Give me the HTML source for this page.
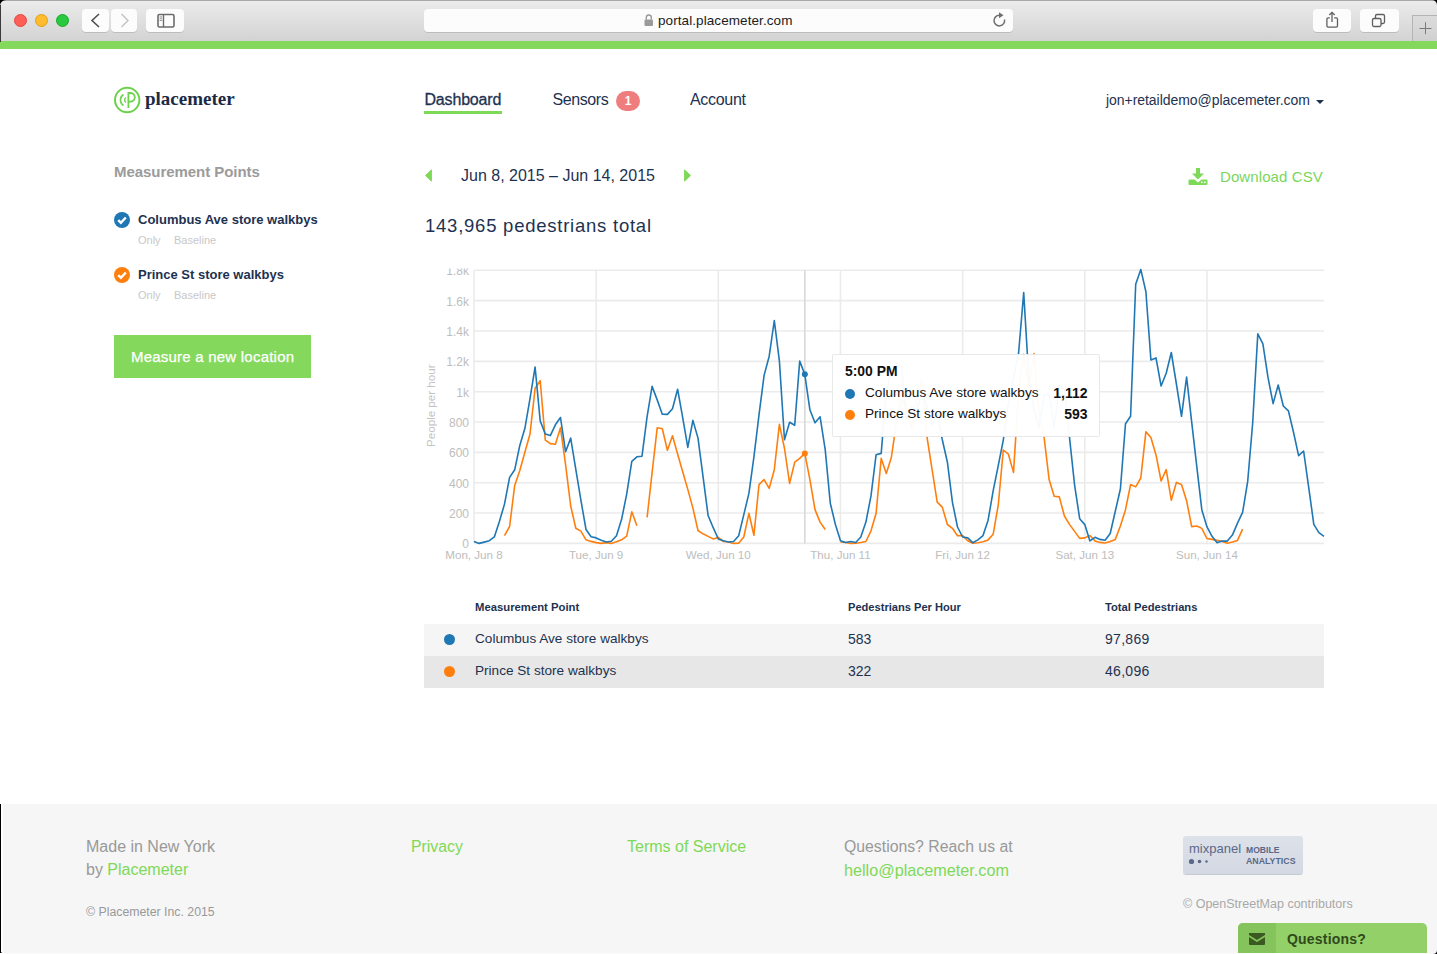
<!DOCTYPE html>
<html><head><meta charset="utf-8">
<style>
*{margin:0;padding:0;box-sizing:border-box}
html,body{width:1437px;height:954px;overflow:hidden;background:#fff;font-family:"Liberation Sans",sans-serif}
.abs{position:absolute}
.t{position:absolute;white-space:nowrap;line-height:1}
#chrome{position:absolute;left:0;top:0;width:1437px;height:41px;background:linear-gradient(#ebebeb,#d3d3d3);border-top:1px solid #a8a8a8}
.btn{position:absolute;top:8px;height:23px;background:#fcfcfc;border-radius:4px;box-shadow:0 1px 0 rgba(0,0,0,0.12)}
#green{position:absolute;left:0;top:41px;width:1437px;height:8px;background:#84d95d}
.navy{color:#1e3250}
#footer{position:absolute;left:0;top:804px;width:1437px;height:150px;background:#f6f6f6}
</style></head><body>
<div id="chrome">
  <div class="abs" style="left:14px;top:13px;width:13px;height:13px;border-radius:50%;background:#fd5f57;border:0.5px solid #e2463f"></div>
  <div class="abs" style="left:35px;top:13px;width:13px;height:13px;border-radius:50%;background:#febc2e;border:0.5px solid #e1a116"></div>
  <div class="abs" style="left:56px;top:13px;width:13px;height:13px;border-radius:50%;background:#28c840;border:0.5px solid #1aab29"></div>
  <div class="btn" style="left:82px;width:27px"></div>
  <div class="btn" style="left:111px;width:26px"></div>
  <div class="btn" style="left:146px;width:38px"></div>
  <svg class="abs" style="left:0;top:-1px" width="1437" height="41">
    <path d="M99 14 L92 20.5 L99 27" fill="none" stroke="#4f4f4f" stroke-width="1.6"/>
    <path d="M121.5 14 L128 20.5 L121.5 27" fill="none" stroke="#c2c2c2" stroke-width="1.4"/>
    <rect x="158" y="14.5" width="16" height="12.5" rx="1.5" fill="none" stroke="#6b6b6b" stroke-width="1.6"/>
    <line x1="163.5" y1="14.5" x2="163.5" y2="27" stroke="#6b6b6b" stroke-width="1.4"/>
    <line x1="159.6" y1="16.9" x2="162.2" y2="16.9" stroke="#777" stroke-width="0.8"/>
    <line x1="159.6" y1="18.7" x2="162.2" y2="18.7" stroke="#777" stroke-width="0.8"/>
    <line x1="159.6" y1="20.5" x2="162.2" y2="20.5" stroke="#777" stroke-width="0.8"/>
  </svg>
  <div class="btn" style="left:424px;width:589px"></div>
  <svg class="abs" style="left:0;top:-1px" width="1437" height="41">
    <rect x="644.5" y="19.5" width="8.5" height="6.5" rx="1" fill="#9a9a9a"/>
    <path d="M646.3 19.5 V17.5 a2.5 2.5 0 0 1 5 0 V19.5" fill="none" stroke="#9a9a9a" stroke-width="1.4"/>
    <path d="M1004.5 19.5 A5.3 5.3 0 1 1 999.5 15.3" fill="none" stroke="#6e6e6e" stroke-width="1.5"/>
    <path d="M999 12.3 L1003.5 15.3 L999 18.3 Z" fill="#6e6e6e"/>
  </svg>
  <div class="btn" style="left:1313px;width:38px"></div>
  <div class="btn" style="left:1360px;width:39px"></div>
  <div class="abs" style="left:1412px;top:14px;width:26px;height:27px;background:linear-gradient(#dcdcdc,#d0d0d0);border:1px solid #b4b4b4;border-bottom:none"></div>
  <svg class="abs" style="left:0;top:-1px" width="1437" height="41">
    <path d="M1329.8 17.8 H1328.2 a1.3 1.3 0 0 0 -1.3 1.3 V25.8 a1.3 1.3 0 0 0 1.3 1.3 H1336.2 a1.3 1.3 0 0 0 1.3 -1.3 V19.1 a1.3 1.3 0 0 0 -1.3 -1.3 H1334.2" fill="none" stroke="#5f5f5f" stroke-width="1.3"/>
    <line x1="1332" y1="12.5" x2="1332" y2="22" stroke="#5f5f5f" stroke-width="1.3"/>
    <path d="M1329.3 15 L1332 12.3 L1334.7 15" fill="none" stroke="#5f5f5f" stroke-width="1.3"/>
    <rect x="1372.5" y="18.5" width="8.5" height="8" rx="1.5" fill="none" stroke="#5f5f5f" stroke-width="1.3"/>
    <path d="M1375.5 18.5 V16 a1.5 1.5 0 0 1 1.5 -1.5 H1383 a1.5 1.5 0 0 1 1.5 1.5 V22 a1.5 1.5 0 0 1 -1.5 1.5 H1381" fill="none" stroke="#5f5f5f" stroke-width="1.3"/>
    <line x1="1425.5" y1="22.2" x2="1425.5" y2="34.2" stroke="#7a7a7a" stroke-width="1"/>
    <line x1="1419.5" y1="28.5" x2="1431.5" y2="28.5" stroke="#7a7a7a" stroke-width="1"/>
  </svg>
  <div class="t" style="left:658px;top:13px;font-size:13.5px;color:#1a1a1a;letter-spacing:0.08px">portal.placemeter.com</div>
</div>
<div id="green"></div>
<svg class="abs" style="left:0;top:0" width="8" height="42"><path d="M0 0 H6 A6 6 0 0 0 0 6 Z" fill="#000"/><rect x="0" y="5" width="1" height="37" fill="#3a3a3a"/></svg>
<svg class="abs" style="left:1429px;top:0" width="8" height="8"><path d="M8 0 H3 A5 5 0 0 1 8 5 Z" fill="#000"/></svg>

<!-- header -->
<svg class="abs" style="left:112px;top:85px" width="32" height="32">
  <circle cx="15.2" cy="15" r="12.2" fill="none" stroke="#6ed14c" stroke-width="2"/>
  <path d="M16.4 23 V8 H18.5 a4.3 4.3 0 0 1 0 8.6 H16.4" fill="none" stroke="#6ed14c" stroke-width="1.8"/>
  <path d="M11.5 9.5 a6.5 6.5 0 0 0 0 11" fill="none" stroke="#6ed14c" stroke-width="1.6"/>
  <path d="M14 12.5 a3 3 0 0 0 0 5" fill="none" stroke="#6ed14c" stroke-width="1.4"/>
</svg>
<div class="t" style="left:145px;top:89px;font-family:'Liberation Serif',serif;font-weight:bold;font-size:19px;color:#1c2b45;letter-spacing:0px">placemeter</div>

<div class="t navy" style="left:424.5px;top:92px;font-size:16px;-webkit-text-stroke:0.3px #1e3250;letter-spacing:-0.18px">Dashboard</div>
<div class="abs" style="left:424px;top:111px;width:78px;height:2.5px;background:#7ed957"></div>
<div class="t navy" style="left:552.5px;top:92px;font-size:16px;letter-spacing:-0.42px">Sensors</div>
<div class="abs" style="left:616px;top:91px;width:24px;height:20px;border-radius:10px;background:#f07d7d;color:#fff;font-size:12px;text-align:center;line-height:20px;font-weight:bold">1</div>
<div class="t navy" style="left:690px;top:92px;font-size:16px;letter-spacing:-0.3px">Account</div>
<div class="t navy" style="left:1106px;top:93.3px;font-size:14px;letter-spacing:-0.05px">jon+retaildemo@placemeter.com</div>
<svg class="abs" style="left:1314px;top:98px" width="12" height="8"><path d="M2 2 H10 L6 6 Z" fill="#1e3250"/></svg>

<!-- sidebar -->
<div class="t" style="left:114px;top:164px;font-size:15px;font-weight:bold;color:#9b9b9b;letter-spacing:-0.05px">Measurement Points</div>
<svg class="abs" style="left:114px;top:211.5px" width="16" height="16"><circle cx="8" cy="8" r="8" fill="#1f77b4"/><path d="M4.2 8.1 L6.9 10.7 L11.8 5.5" fill="none" stroke="#fff" stroke-width="2.4"/></svg>
<div class="t navy" style="left:138px;top:213px;font-size:13px;font-weight:bold">Columbus Ave store walkbys</div>
<div class="t" style="left:138px;top:235px;font-size:11px;color:#c8c8c8">Only</div>
<div class="t" style="left:174px;top:235px;font-size:11px;color:#c8c8c8">Baseline</div>
<svg class="abs" style="left:114px;top:266.5px" width="16" height="16"><circle cx="8" cy="8" r="8" fill="#ff7f0e"/><path d="M4.2 8.1 L6.9 10.7 L11.8 5.5" fill="none" stroke="#fff" stroke-width="2.4"/></svg>
<div class="t navy" style="left:138px;top:268px;font-size:13px;font-weight:bold">Prince St store walkbys</div>
<div class="t" style="left:138px;top:290px;font-size:11px;color:#c8c8c8">Only</div>
<div class="t" style="left:174px;top:290px;font-size:11px;color:#c8c8c8">Baseline</div>
<div class="abs" style="left:114px;top:335px;width:197px;height:43px;background:#84d95c"></div>
<div class="t" style="left:131px;top:349px;font-size:15px;color:#fff;-webkit-text-stroke:0.25px #fff;letter-spacing:0.22px">Measure a new location</div>

<!-- date nav -->
<svg class="abs" style="left:424px;top:168px" width="10" height="15"><path d="M1.6 7.5 L7.4 1.9 V13.1 Z" fill="#7ed957" stroke="#7ed957" stroke-width="1" stroke-linejoin="round"/></svg>
<div class="t navy" style="left:461px;top:168px;font-size:16px">Jun 8, 2015 – Jun 14, 2015</div>
<svg class="abs" style="left:682px;top:168px" width="10" height="15"><path d="M8.4 7.5 L2.6 1.9 V13.1 Z" fill="#7ed957" stroke="#7ed957" stroke-width="1" stroke-linejoin="round"/></svg>
<svg class="abs" style="left:1188px;top:167px" width="20" height="19">
  <path d="M8 1 H12 V6.5 H16 L10 12.5 L4 6.5 H8 Z" fill="#7ed957"/>
  <path d="M1.5 12.5 H6.5 L10 15.5 L13.5 12.5 H18.5 a1 1 0 0 1 1 1 V17 a1 1 0 0 1 -1 1 H1.5 a1 1 0 0 1 -1 -1 V13.5 a1 1 0 0 1 1 -1 Z" fill="#7ed957"/>
  <rect x="13" y="14.5" width="1.6" height="1.6" fill="#fff"/><rect x="16" y="14.5" width="1.6" height="1.6" fill="#fff"/>
</svg>
<div class="t" style="left:1220px;top:169px;font-size:15px;color:#7bd65a;letter-spacing:0.1px">Download CSV</div>
<div class="t navy" style="left:425px;top:216.5px;font-size:18.5px;letter-spacing:0.76px">143,965 pedestrians total</div>

<!-- CHART -->
<!--CHART--><div id="chart">
<svg class="abs" style="left:0;top:0" width="1437" height="600" id="chartsvg">
<defs><clipPath id="cl"><rect x="400" y="268.6" width="950" height="330"/></clipPath></defs>
<g clip-path="url(#cl)">
<line x1="474" x2="1324" y1="543.40" y2="543.40" stroke="#ebebeb" stroke-width="1.6"/>
<line x1="474" x2="1324" y1="513.06" y2="513.06" stroke="#ebebeb" stroke-width="1.6"/>
<line x1="474" x2="1324" y1="482.71" y2="482.71" stroke="#ebebeb" stroke-width="1.6"/>
<line x1="474" x2="1324" y1="452.37" y2="452.37" stroke="#ebebeb" stroke-width="1.6"/>
<line x1="474" x2="1324" y1="422.02" y2="422.02" stroke="#ebebeb" stroke-width="1.6"/>
<line x1="474" x2="1324" y1="391.68" y2="391.68" stroke="#ebebeb" stroke-width="1.6"/>
<line x1="474" x2="1324" y1="361.34" y2="361.34" stroke="#ebebeb" stroke-width="1.6"/>
<line x1="474" x2="1324" y1="330.99" y2="330.99" stroke="#ebebeb" stroke-width="1.6"/>
<line x1="474" x2="1324" y1="300.65" y2="300.65" stroke="#ebebeb" stroke-width="1.6"/>
<line x1="474" x2="1324" y1="270.30" y2="270.30" stroke="#ebebeb" stroke-width="1.6"/>
<line x1="474.00" x2="474.00" y1="270.3" y2="543.4" stroke="#ebebeb" stroke-width="1.6"/>
<line x1="596.16" x2="596.16" y1="270.3" y2="543.4" stroke="#ebebeb" stroke-width="1.6"/>
<line x1="718.31" x2="718.31" y1="270.3" y2="543.4" stroke="#ebebeb" stroke-width="1.6"/>
<line x1="840.47" x2="840.47" y1="270.3" y2="543.4" stroke="#ebebeb" stroke-width="1.6"/>
<line x1="962.62" x2="962.62" y1="270.3" y2="543.4" stroke="#ebebeb" stroke-width="1.6"/>
<line x1="1084.78" x2="1084.78" y1="270.3" y2="543.4" stroke="#ebebeb" stroke-width="1.6"/>
<line x1="1206.93" x2="1206.93" y1="270.3" y2="543.4" stroke="#ebebeb" stroke-width="1.6"/>
<text x="469" y="548.30" text-anchor="end" font-size="12" fill="#bdbdbd">0</text>
<text x="469" y="517.96" text-anchor="end" font-size="12" fill="#bdbdbd">200</text>
<text x="469" y="487.61" text-anchor="end" font-size="12" fill="#bdbdbd">400</text>
<text x="469" y="457.27" text-anchor="end" font-size="12" fill="#bdbdbd">600</text>
<text x="469" y="426.92" text-anchor="end" font-size="12" fill="#bdbdbd">800</text>
<text x="469" y="396.58" text-anchor="end" font-size="12" fill="#bdbdbd">1k</text>
<text x="469" y="366.24" text-anchor="end" font-size="12" fill="#bdbdbd">1.2k</text>
<text x="469" y="335.89" text-anchor="end" font-size="12" fill="#bdbdbd">1.4k</text>
<text x="469" y="305.55" text-anchor="end" font-size="12" fill="#bdbdbd">1.6k</text>
<text x="469" y="275.20" text-anchor="end" font-size="12" fill="#bdbdbd">1.8k</text>
<text x="474.00" y="559" text-anchor="middle" font-size="11.6" fill="#bdbdbd">Mon, Jun 8</text>
<text x="596.16" y="559" text-anchor="middle" font-size="11.6" fill="#bdbdbd">Tue, Jun 9</text>
<text x="718.31" y="559" text-anchor="middle" font-size="11.6" fill="#bdbdbd">Wed, Jun 10</text>
<text x="840.47" y="559" text-anchor="middle" font-size="11.6" fill="#bdbdbd">Thu, Jun 11</text>
<text x="962.62" y="559" text-anchor="middle" font-size="11.6" fill="#bdbdbd">Fri, Jun 12</text>
<text x="1084.78" y="559" text-anchor="middle" font-size="11.6" fill="#bdbdbd">Sat, Jun 13</text>
<text x="1206.93" y="559" text-anchor="middle" font-size="11.6" fill="#bdbdbd">Sun, Jun 14</text>
<text transform="translate(435.2 405.7) rotate(-90)" text-anchor="middle" font-size="11.6" fill="#c4c4c4">People per hour</text>
<line x1="804.84" x2="804.84" y1="270.3" y2="543.4" stroke="#d6d6d6" stroke-width="1.5"/>
<path d="M504.5 535.7L509.6 526.5L514.7 485.4L519.8 470.5L524.9 452.3L530.0 434.0L535.1 388.3L540.2 380.7L545.3 440.1L550.3 443.6L555.4 444.3L560.5 427.8L565.6 464.8L570.7 506.0L575.8 528.3L580.9 531.1L586.0 539.8L591.1 541.4L596.2 542.6L601.2 543.4L606.3 542.6L611.4 543.4L616.5 541.7L621.6 539.8L626.7 536.1L631.8 511.8L636.9 525.8M647.1 517.4L652.1 472.6L657.2 427.8L662.3 428.8L667.4 450.2L672.5 435.7L677.6 454.0L682.7 471.7L687.8 489.4L692.9 508.1L698.0 530.5L703.0 533.8L708.1 536.4L713.2 538.9L718.3 537.5L723.4 541.5L728.5 542.0L733.6 543.4L738.7 543.3L743.8 537.0L748.9 513.3L753.9 535.3L759.0 484.6L764.1 479.6L769.2 488.4L774.3 469.7L779.4 424.3L784.5 448.5L789.6 483.4L794.7 462.2L799.7 458.4L804.8 453.4L809.9 479.6L815.0 509.6L820.1 522.1L825.2 529.5M840.5 542.0L845.6 542.5L850.6 543.4L855.7 543.3L860.8 542.5L865.9 541.5L871.0 530.8L876.1 513.3L881.2 458.4L886.3 473.4L891.4 457.2L896.5 422.0L901.5 399.3L906.6 406.9L911.7 428.1L916.8 399.3L921.9 379.5L927.0 437.2L932.1 469.7L937.2 502.1L942.3 507.1L947.4 524.5L952.4 528.3L957.5 535.8L962.6 535.6L967.7 540.7L972.8 543.2L977.9 542.7L983.0 541.8L988.1 539.9L993.2 534.2L998.3 504.7L1003.3 450.0L1008.4 454.2L1013.5 472.4L1018.6 392.4L1023.7 354.4L1028.8 386.8L1033.9 353.6L1039.0 412.0L1044.1 437.3L1049.1 479.5L1054.2 496.3L1059.3 496.9L1064.4 516.0L1069.5 524.4L1074.6 531.4L1079.7 538.4L1084.8 537.9L1089.9 535.5L1095.0 540.9L1100.0 542.4L1105.1 543.0L1110.2 541.5L1115.3 539.4L1120.4 526.0L1125.5 509.7L1130.6 484.5L1135.7 486.9L1140.8 478.0L1145.9 431.7L1150.9 437.6L1156.0 454.9L1161.1 481.0L1166.2 469.7L1171.3 500.2L1176.4 482.4L1181.5 484.5L1186.6 500.8L1191.7 526.6L1196.8 526.0L1201.8 528.4L1206.9 538.5L1212.0 539.4L1217.1 540.4L1222.2 541.4L1227.3 543.2L1232.4 542.0L1237.5 540.4L1242.6 529.1" fill="none" stroke="#ff7f0e" stroke-width="1.6" stroke-linejoin="round"/>
<path d="M474.0 541.4L479.1 543.4L484.2 542.1L489.3 540.7L494.4 536.8L499.4 521.5L504.5 504.1L509.6 477.4L514.7 469.8L519.8 445.4L524.9 428.3L530.0 398.6L535.1 367.0L540.2 420.9L545.3 434.0L550.3 435.6L555.4 424.8L560.5 417.5L565.6 451.8L570.7 438.1L575.8 469.4L580.9 500.2L586.0 529.5L591.1 536.8L596.2 537.9L601.2 540.2L606.3 542.0L611.4 541.3L616.5 535.7L621.6 519.3L626.7 494.1L631.8 461.4L636.9 456.8L642.0 456.2L647.1 416.6L652.1 386.4L657.2 399.9L662.3 414.2L667.4 414.4L672.5 408.8L677.6 389.2L682.7 417.6L687.8 447.4L692.9 420.4L698.0 438.1L703.0 476.4L708.1 515.5L713.2 527.7L718.3 539.0L723.4 540.8L728.5 542.0L733.6 541.5L738.7 535.8L743.8 514.6L748.9 493.4L753.9 457.2L759.0 414.8L764.1 375.4L769.2 356.2L774.3 320.5L779.4 361.1L784.5 439.7L789.6 422.3L794.7 425.3L799.7 361.1L804.8 374.4L809.9 409.8L815.0 422.8L820.1 416.8L825.2 449.7L830.3 503.3L835.4 524.5L840.5 540.8L845.6 542.5L850.6 541.5L855.7 542.5L860.8 537.0L865.9 522.1L871.0 495.9L876.1 454.7L881.2 453.4L886.3 391.7L891.4 368.9L896.5 362.9L901.5 365.9L906.6 419.0L911.7 406.9L916.8 411.4L921.9 391.7L927.0 406.9L932.1 425.1L937.2 414.4L942.3 439.7L947.4 462.2L952.4 502.1L957.5 527.0L962.6 537.0L967.7 537.9L972.8 542.7L977.9 539.9L983.0 535.6L988.1 520.2L993.2 490.7L998.3 465.4L1003.3 440.1L1008.4 403.6L1013.5 378.3L1018.6 353.0L1023.7 292.6L1028.8 378.3L1033.9 409.2L1039.0 427.5L1044.1 395.2L1049.1 393.8L1054.2 427.5L1059.3 385.3L1064.4 389.6L1069.5 437.3L1074.6 485.1L1079.7 518.8L1084.8 524.6L1089.9 540.9L1095.0 537.3L1100.0 539.4L1105.1 540.3L1110.2 533.5L1115.3 511.2L1120.4 489.0L1125.5 423.7L1130.6 416.3L1135.7 284.3L1140.8 269.4L1145.9 291.7L1150.9 359.9L1156.0 357.9L1161.1 386.0L1166.2 373.3L1171.3 352.5L1176.4 384.0L1181.5 416.3L1186.6 377.1L1191.7 422.2L1196.8 466.7L1201.8 509.7L1206.9 526.7L1212.0 536.3L1217.1 542.7L1222.2 541.1L1227.3 541.1L1232.4 535.1L1237.5 523.1L1242.6 512.4L1247.7 481.3L1252.7 422.8L1257.8 333.9L1262.9 343.9L1268.0 377.4L1273.1 403.6L1278.2 385.0L1283.3 406.0L1288.4 410.8L1293.5 432.3L1298.6 455.7L1303.6 451.0L1308.7 487.3L1313.8 524.3L1318.9 532.7L1324.0 536.3" fill="none" stroke="#1f77b4" stroke-width="1.6" stroke-linejoin="round"/>
<circle cx="804.84" cy="374.36" r="3" fill="#1f77b4"/>
<circle cx="804.84" cy="453.45" r="3" fill="#ff7f0e"/>
</g></svg>
<div class="abs" style="left:832px;top:354px;width:268px;height:83px;background:rgba(255,255,255,0.965);border:1px solid rgba(0,0,0,0.09);border-radius:2px"></div>
<div class="t" style="left:845px;top:365px;font-size:13.9px;font-weight:bold;color:#111">5:00 PM</div>
<div class="abs" style="left:844.5px;top:388.5px;width:10.5px;height:10.5px;border-radius:50%;background:#1f77b4"></div>
<div class="abs" style="left:844.5px;top:409.5px;width:10.5px;height:10.5px;border-radius:50%;background:#ff7f0e"></div>
<div class="t" style="left:865px;top:386px;font-size:13.6px;color:#111">Columbus Ave store walkbys</div>
<div class="t" style="left:865px;top:407px;font-size:13.6px;color:#111">Prince St store walkbys</div>
<div class="t" style="left:1051px;top:386px;width:36.5px;text-align:right;font-size:14px;font-weight:bold;color:#111">1,112</div>
<div class="t" style="left:1051px;top:407px;width:36.5px;text-align:right;font-size:14px;font-weight:bold;color:#111">593</div>
</div><!--/CHART-->

<!-- table -->
<div class="t navy" style="left:475px;top:601.5px;font-size:11.3px;font-weight:bold">Measurement Point</div>
<div class="t navy" style="left:848px;top:601.5px;font-size:11.1px;font-weight:bold">Pedestrians Per Hour</div>
<div class="t navy" style="left:1105px;top:601.5px;font-size:11.2px;font-weight:bold">Total Pedestrians</div>
<div class="abs" style="left:424px;top:624px;width:900px;height:32px;background:#f5f5f5"></div>
<div class="abs" style="left:424px;top:656px;width:900px;height:32px;background:#e7e7e7"></div>
<div class="abs" style="left:444px;top:634px;width:11px;height:11px;border-radius:50%;background:#1f77b4"></div>
<div class="abs" style="left:444px;top:666px;width:11px;height:11px;border-radius:50%;background:#ff7f0e"></div>
<div class="t navy" style="left:475px;top:632px;font-size:13.6px">Columbus Ave store walkbys</div>
<div class="t navy" style="left:475px;top:664px;font-size:13.6px">Prince St store walkbys</div>
<div class="t navy" style="left:848px;top:632px;font-size:14px">583</div>
<div class="t navy" style="left:848px;top:664px;font-size:14px">322</div>
<div class="t navy" style="left:1105px;top:632px;font-size:14px;letter-spacing:0.3px">97,869</div>
<div class="t navy" style="left:1105px;top:664px;font-size:14px;letter-spacing:0.3px">46,096</div>

<!-- footer -->
<div id="footer">
  <div class="abs" style="left:0;top:0;width:1px;height:150px;background:#000"></div>
  <div class="abs" style="left:1px;top:0;width:2px;height:150px;background:#fff"></div>
  <div class="t" style="left:86px;top:35px;font-size:16px;color:#999">Made in New York</div>
  <div class="t" style="left:86px;top:58px;font-size:16px;color:#999">by <span style="color:#7ed957">Placemeter</span></div>
  <div class="t" style="left:86px;top:101.5px;font-size:12.3px;color:#999">© Placemeter Inc. 2015</div>
  <div class="t" style="left:411px;top:35px;font-size:15.8px;color:#7ed957">Privacy</div>
  <div class="t" style="left:627px;top:35px;font-size:16px;color:#7ed957">Terms of Service</div>
  <div class="t" style="left:844px;top:35px;font-size:15.8px;color:#999">Questions? Reach us at</div>
  <div class="t" style="left:844px;top:58px;font-size:16.2px;color:#7ed957">hello@placemeter.com</div>
  <div class="abs" style="left:1183px;top:32px;width:120px;height:38px;border-radius:3px;background:linear-gradient(#dde1ea,#d3d8e2);box-shadow:0 1px 0 #c4c9d4"></div>
  <div class="t" style="left:1189px;top:38px;font-size:13px;color:#5b6888">mixpanel</div>
  <svg class="abs" style="left:1186px;top:53px" width="26" height="10"><circle cx="5.5" cy="4.5" r="2.6" fill="#5b6888"/><circle cx="13.5" cy="4.5" r="1.8" fill="#5b6888"/><circle cx="20.5" cy="4.5" r="1.2" fill="#5b6888"/></svg>
  <div class="t" style="left:1246px;top:42px;font-size:8.6px;font-weight:bold;color:#5b6888">MOBILE</div>
  <div class="t" style="left:1246px;top:53px;font-size:8.8px;font-weight:bold;color:#5b6888">ANALYTICS</div>
  <div class="t" style="left:1183px;top:94px;font-size:12.5px;color:#a8a8a8">© OpenStreetMap contributors</div>
  <div class="abs" style="left:1238px;top:119px;width:189px;height:35px;border-radius:5px 5px 0 0;background:#93d068;overflow:hidden">
    <div class="abs" style="left:0;top:0;width:38px;height:35px;background:#85c45c"></div>
  </div>
  <svg class="abs" style="left:1248px;top:128px" width="18" height="14"><path d="M1 1 H17 V3 L9 8 L1 3 Z" fill="#3b5a22"/><path d="M1 5 L9 10 L17 5 V12 a1 1 0 0 1 -1 1 H2 a1 1 0 0 1 -1 -1 Z" fill="#3b5a22"/></svg>
  <div class="t" style="left:1287px;top:128px;font-size:14px;font-weight:bold;color:#2f4a1c;letter-spacing:0.2px">Questions?</div>
</div>
<svg class="abs" style="left:0;top:946px" width="8" height="8"><path d="M0 8 H5 A5 5 0 0 1 0 3 Z" fill="#000"/></svg>
<div class="abs" style="left:0;top:953px;width:1437px;height:1px;background:#fbfbfb"></div>
<svg class="abs" style="left:1431px;top:948px" width="6" height="6"><path d="M6 6 H2 A4 4 0 0 0 6 2 Z" fill="#000"/></svg>
</body></html>
